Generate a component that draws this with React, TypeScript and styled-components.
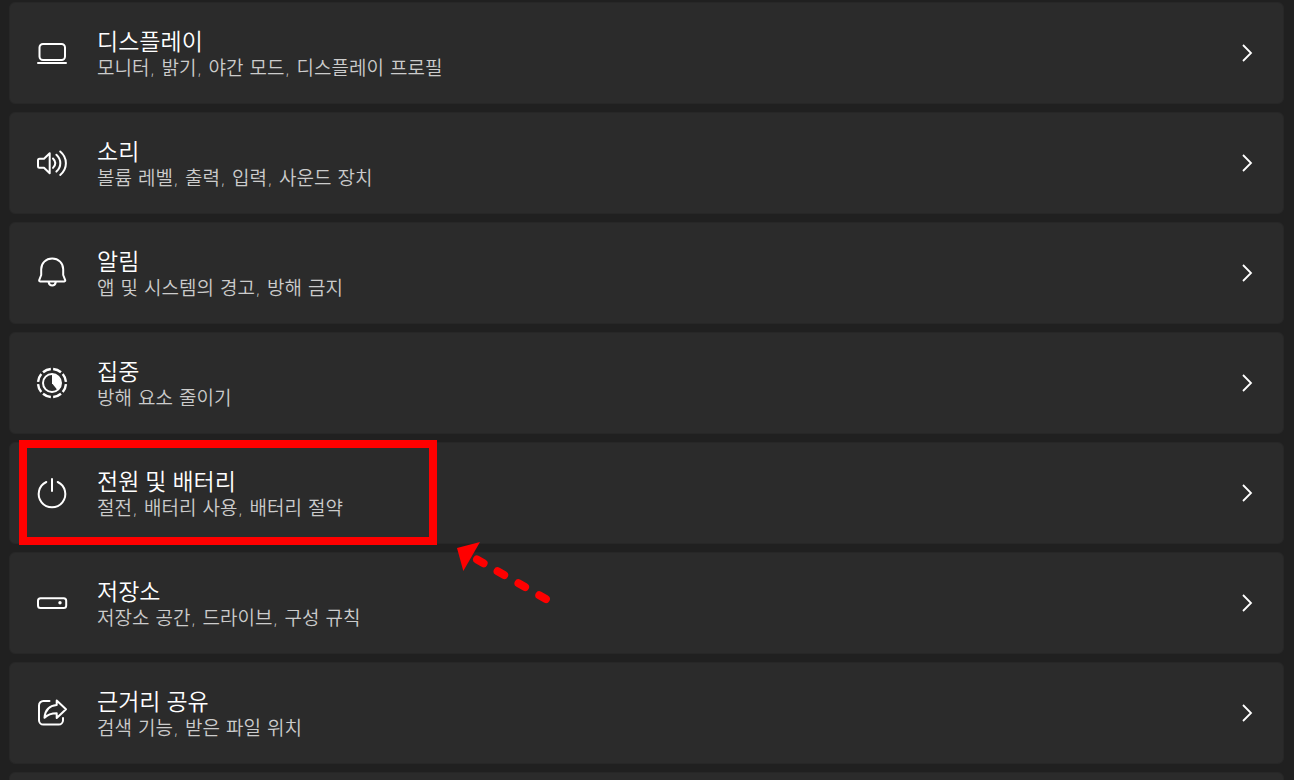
import React from 'react';
import styled, { createGlobalStyle } from 'styled-components';

const GlobalStyle = createGlobalStyle`
  *, *::before, *::after { box-sizing: border-box; }
  body {
    margin: 0;
    background: #202020;
    font-family: "Noto Sans", "Noto Sans CJK KR", sans-serif;
  }
`;

const Page = styled.main`
  height: 100vh;
  overflow: hidden;
  padding: 2px 10px 0 9px;
`;

const List = styled.ul`
  display: flex;
  flex-direction: column;
  gap: 8px;
  margin: 0;
  padding: 0;
  list-style: none;
`;

const Item = styled.li`
  position: relative;
`;

const Card = styled.button`
  display: flex;
  align-items: center;
  width: 100%;
  min-height: 102px;
  padding: 0 27px 0 26px;
  border: 1px solid #272727;
  border-radius: 6px;
  background: #2b2b2b;
  color: #ffffff;
  font-family: inherit;
  text-align: left;
`;

const Icon = styled.svg`
  flex: none;
  width: 32px;
  height: 32px;
  fill: none;
  stroke: currentColor;
  stroke-width: 2;
  stroke-linecap: round;
  stroke-linejoin: round;
`;

const Labels = styled.span`
  display: flex;
  flex: 1;
  flex-direction: column;
  gap: 1px;
  min-width: 0;
  margin-left: 29px;
  padding-top: 3px;
`;

const Title = styled.span`
  font-size: 23px;
  font-weight: 350;
  line-height: 26px;
`;

const Description = styled.span`
  color: #cccccc;
  font-family: "DejaVu Sans", "Noto Sans CJK KR", sans-serif;
  font-size: 19px;
  font-weight: 350;
  line-height: 26px;
`;

const Chevron = styled.svg`
  flex: none;
  width: 18px;
  height: 18px;
  fill: none;
  stroke: currentColor;
  stroke-width: 1.8;
`;

const Highlight = styled.span`
  position: absolute;
  z-index: 1;
  top: -2px;
  left: 10px;
  width: 418px;
  height: 105px;
  border: 8px solid #ff0000;
  pointer-events: none;
`;

const Arrow = styled.svg`
  position: absolute;
  z-index: 1;
  top: 100px;
  left: 441px;
  width: 110px;
  height: 70px;
  pointer-events: none;
`;

type Setting = {
  title: string;
  description: string;
  icon: React.ReactNode;
  highlighted?: boolean;
};

const settings: Setting[] = [
  {
    title: '디스플레이',
    description: '모니터, 밝기, 야간 모드, 디스플레이 프로필',
    icon: (
      <>
        <rect x="3.5" y="7" width="25.5" height="16" rx="3.5" />
        <path d="M2 26H30" />
      </>
    ),
  },
  {
    title: '소리',
    description: '볼륨 레벨, 출력, 입력, 사운드 장치',
    icon: (
      <>
        <path d="M13.7 6.2v20L8 20.8H3.5a1.5 1.5 0 0 1-1.5-1.5v-6.1a1.5 1.5 0 0 1 1.5-1.5H8z" />
        <path d="M17 11.5q4.6 4.6 0 9.4M20.4 7.8c5.2 4.9 5.2 12 0 16.8M24.2 4.5c7.6 6.4 7.6 17 0 23.4" />
      </>
    ),
  },
  {
    title: '알림',
    description: '앱 및 시스템의 경고, 방해 금지',
    icon: (
      <>
        <path d="M16.2 1.5C9.8 1.5 5.2 6.2 5.2 12.3V18L3.2 23.2c-.2.7.1 1.2.8 1.2h24.4c.7 0 1-.5.8-1.2L27.2 18v-5.7c0-6.1-4.6-10.8-11-10.8z" />
        <path d="M12.6 25c.4 2.3 1.7 3.5 3.6 3.5s3.2-1.2 3.6-3.5" />
      </>
    ),
  },
  {
    title: '집중',
    description: '방해 요소 줄이기',
    icon: (
      <>
        <circle
          cx="16"
          cy="16"
          r="14"
          pathLength="80"
          strokeDasharray="7.8 2.2"
          strokeDashoffset="-1.1"
          strokeLinecap="butt"
          strokeWidth="2.4"
        />
        <circle cx="16" cy="16" r="9" />
        <path d="M16 7.5A8.5 8.5 0 0 1 21.2 22.7L16 16.2z" fill="currentColor" stroke="none" />
      </>
    ),
  },
  {
    title: '전원 및 배터리',
    description: '절전, 배터리 사용, 배터리 절약',
    highlighted: true,
    icon: <path d="M16 2v12M10.3 5A13.3 13.3 0 1 0 21.7 5" />,
  },
  {
    title: '저장소',
    description: '저장소 공간, 드라이브, 구성 규칙',
    icon: (
      <>
        <rect x="2" y="11.3" width="28.2" height="9.6" rx="2.5" />
        <circle cx="24" cy="15.8" r="1.7" fill="currentColor" stroke="none" />
      </>
    ),
  },
  {
    title: '근거리 공유',
    description: '검색 기능, 받은 파일 위치',
    icon: (
      <>
        <path d="M13.5 4H7.4A4.4 4.4 0 0 0 3 8.4v14.8a4.4 4.4 0 0 0 4.4 4.4h15.2a4.4 4.4 0 0 0 4.4-4.4V21" />
        <path d="M20.7 3.5 30 12.3l-9.3 8.7v-4.8c-5 0-8.8 1-12.2 4.6.6-7.6 5-12.1 12.2-12.7z" />
      </>
    ),
  },
];

function Callout() {
  return (
    <>
      <Highlight />
      <Arrow viewBox="0 0 110 70" aria-hidden="true">
        <path d="M7 6 30 0 13.3 29z" fill="#ff0000" />
        <path
          d="M27 17.5 33.6 21.2M47.6 29.3 54.2 33M68.5 41.3 75.1 45M89.3 53.3 95.9 57"
          fill="none"
          stroke="#ff0000"
          strokeWidth="8"
          strokeLinecap="round"
        />
      </Arrow>
    </>
  );
}

export default function App() {
  return (
    <Page>
      <GlobalStyle />
      <List>
        {settings.map((item) => (
          <Item key={item.title}>
            <Card type="button">
              <Icon viewBox="0 0 32 32" aria-hidden="true">{item.icon}</Icon>
              <Labels>
                <Title>{item.title}</Title>
                <Description>{item.description}</Description>
              </Labels>
              <Chevron viewBox="0 0 18 18" aria-hidden="true">
                <path d="M5 1 13 9 5 17" />
              </Chevron>
            </Card>
            {item.highlighted && <Callout />}
          </Item>
        ))}
        <Item>
          <Card type="button" />
        </Item>
      </List>
    </Page>
  );
}
